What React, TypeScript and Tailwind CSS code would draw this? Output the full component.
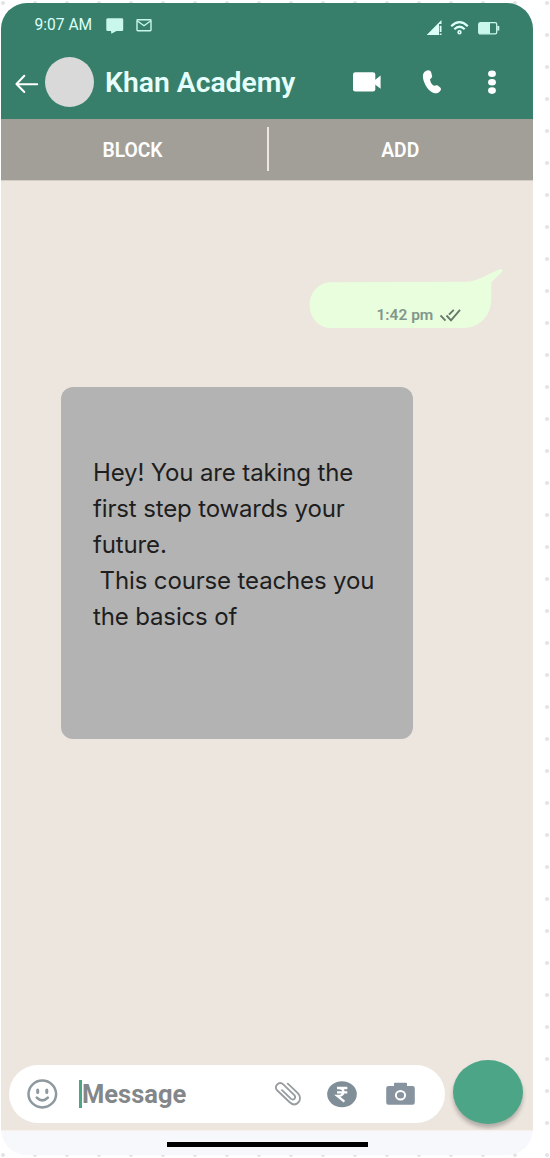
import React from "react";

function StatusBar() {
  return (
    <div className="flex h-[43px] shrink-0 items-center pl-[33.5px] text-[#dcfff8]">
      <span className="w-[71px] pt-px text-[15.6px] leading-5 whitespace-nowrap">9:07 AM</span>
      <svg className="mt-[2px] h-4 w-[18px]" viewBox="0 0 18 16" fill="#c9f7ec">
        <path d="M2 .3H16Q17.2.3 17.2 1.6V12Q17.2 13 16 13H10.5L5.3 15.7 5 13H1.7Q.3 13 .3 11.8V1.6Q.3.3 2 .3Z" />
      </svg>
      <svg className="ml-[12px] h-[14px] w-[16px]" viewBox="0 0 16 14" fill="none" stroke="#c9f7ec" strokeWidth="1.4">
        <rect x="1" y="1.7" width="14" height="11" rx=".7" />
        <path d="M1.5 3 8 7.7 14.5 3" />
      </svg>
      <svg className="mt-[7px] ml-[274.5px] h-[16px] w-[17px]" viewBox="0 0 17 16" fill="#dcfff8">
        <path d="M.7 15 12 3.5V15ZM12 3.5 15.5 0V4H13V15H12ZM13.7 5.7H15.5V12H13.7ZM13.7 13.4H15.5V15H13.7Z" />
      </svg>
      <svg className="mt-[6px] ml-[7px] h-[14px] w-[19px]" viewBox="0 0 19 14" fill="none" stroke="#dcfff8" strokeWidth="2.2">
        <path d="M1.2 5.2Q9.5-2.8 17.8 5.2M4.3 8.2Q9.5 3.3 14.7 8.2" />
        <circle cx="9.5" cy="11.2" r="1.4" strokeWidth="1.6" />
      </svg>
      <svg className="mt-[7px] ml-[8.5px] h-[13px] w-[22px]" viewBox="0 0 22 13" fill="none" stroke="#c9f7ec" strokeWidth="1.3">
        <rect x=".7" y=".7" width="18" height="11.2" rx="1.6" />
        <path d="M1 1H12V11.8H1Z" fill="#c9f7ec" stroke="none" />
        <path d="M20.3 4V8.5" strokeWidth="2" />
      </svg>
    </div>
  );
}

function Header() {
  return (
    <header className="flex h-[116px] shrink-0 flex-col bg-[#377f6a]">
      <StatusBar />
      <div className="flex h-[73px] items-center pl-[13px]">
        <svg className="mt-[3px] h-[20px] w-[25px]" viewBox="0 0 25 20" fill="none" stroke="#fff" strokeWidth="2" strokeLinecap="round" strokeLinejoin="round">
          <path d="M10.3 1.7 2.5 10 10.3 18M2.5 10.2H23.2" />
        </svg>
        <div className="-mt-px ml-[5.5px] h-[50px] w-[49px] rounded-[50%] bg-[#d9d9d9]" />
        <h1 className="ml-[11.5px] w-[248px] text-[28.3px] leading-8 font-semibold whitespace-nowrap text-[#e6fffc]">Khan Academy</h1>
        <svg className="-mt-px h-[20px] w-[28px]" viewBox="0 0 28 20" fill="#fff">
          <rect y=".2" width="22.3" height="19.4" rx="2.4" />
          <path d="M22 8 27.6 3.5V16.7L22 12.5Z" />
        </svg>
        <svg className="-mt-px ml-[41px] h-[24px] w-[20px]" viewBox="0 0 20 24" fill="#fff">
          <path d="M4.2.8C6.5-.2 8.5.3 9.2 2.4L10.1 6C10.5 7.7 8.6 8.3 8.1 9.3 8 11.3 9.4 14 11.4 15.5 13 16 14.2 14.8 15.7 15.6L18 17.2C19.6 18.5 19.1 20.5 17.5 21.8 15 24.1 11.7 23.7 8.9 21.6 5.4 18.9 2.1 13.7 1.1 8.5.4 4.9 1.3 2.1 4.2.8Z" />
        </svg>
        <svg className="-mt-px ml-[46px] h-[25px] w-[8px]" viewBox="0 0 8 25" fill="#fff">
          <ellipse cx="4" cy="3.8" rx="3.9" ry="3.3" />
          <ellipse cx="4" cy="12.3" rx="3.9" ry="3.3" />
          <ellipse cx="4" cy="20.6" rx="3.9" ry="3.3" />
        </svg>
      </div>
    </header>
  );
}

function ActionBar() {
  return (
    <div className="flex h-[62px] shrink-0 items-center border-b border-[#d5cdc4] bg-[#a29f99] text-[19.3px] font-semibold text-white">
      <button className="w-[266px] pt-[3px] pr-[3px] text-center">BLOCK</button>
      <div className="-mt-px h-[44px] w-[1.5px] bg-[#eee7e0]" />
      <button className="flex-1 pt-[3px] pr-px text-center">ADD</button>
    </div>
  );
}

function SentBubble() {
  return (
    <div className="relative ml-[308px] h-[60px] w-[196px]">
      <svg className="h-[60px] w-[196px]" viewBox="0 0 196 60" fill="#e9fedc">
        <path d="M22 14.2 156 13.8C162 13.6 166 12.4 172 10L190 1.6C193 .7 194.6 2.3 192.8 4.2L184 12.4C182.6 13.7 182.3 14.5 182.3 16V31C182.3 48 170 60 154 60H22C10 60 .7 50 .7 37 .7 24 10 14.2 22 14.2Z" />
      </svg>
      <div className="absolute top-[37px] left-[67.5px] flex items-center whitespace-nowrap text-[#81978b]">
        <span className="w-[63px] text-[15.5px] leading-5 font-semibold">1:42 pm</span>
        <svg className="h-[13px] w-[21px]" viewBox="0 0 21 13" fill="none" stroke="#65786c" strokeWidth="1.9">
          <path d="M.5 6.5 5.5 11.7M6.5 6.5 11 11.3 20 .8M9 5.7 13.8.8" />
        </svg>
      </div>
    </div>
  );
}

function Composer() {
  return (
    <div className="flex items-start pl-[8px]">
      <div className="mt-[5px] flex h-[58px] w-[436px] items-center rounded-full bg-white pl-[17.5px]">
        <svg className="h-[30px] w-[31px]" viewBox="0 0 31 30" fill="none" stroke="#8d989f" strokeLinecap="round">
          <ellipse cx="15.3" cy="15" rx="13.8" ry="13.4" strokeWidth="2.5" />
          <path d="M10.7 11V13.4M19.8 11V13.4" strokeWidth="3" />
          <path d="M9.8 18.6Q15.3 24.3 20.8 18.6" strokeWidth="2.7" />
        </svg>
        <div className="-mt-px ml-[21.5px] h-[28px] w-[3px] bg-[#4da588]" />
        <span className="w-[192.5px] text-[25.5px] leading-7 font-bold text-[#838789]">Message</span>
        <svg className="h-[24px] w-[26px]" viewBox="0 0 26 24" fill="none" stroke="#969c9f" strokeWidth="1.8" strokeLinecap="round">
          <path d="M12.8 1.7 22.8 11.2C25.6 14 25.8 18 23.3 20.5 20.7 23 17.2 22.8 14.4 20L2.3 8.5C.4 6.7.4 4.2 2.2 2.5 4 .7 6.6.9 8.5 2.7L19.3 13.2C20.4 14.4 20.4 15.8 19.4 16.8 18.4 17.8 17 17.8 15.8 16.6L7 8.2" />
        </svg>
        <svg className="ml-[26px] h-[28px] w-[30px]" viewBox="0 0 30 28">
          <ellipse cx="15" cy="14.3" rx="14.8" ry="13" fill="#808e97" />
          <path d="M10 8H20.3M10 12.4H20.3M11 8C18.5 7.5 18.5 16.4 10.5 16L17.4 21.7" fill="none" stroke="#fff" strokeWidth="2.3" />
        </svg>
        <svg className="ml-[29px] h-[24px] w-[29px]" viewBox="0 0 29 24">
          <path d="M9 .8H20Q21 .8 21 1.8V4H26.5Q28.8 4 28.8 6.3V20.5Q28.8 22.8 26.5 22.8H2.5Q.2 22.8.2 20.5V6.3Q.2 4 2.5 4H8V1.8Q8 .8 9 .8Z" fill="#8794a0" />
          <ellipse cx="14.5" cy="13.3" rx="4.6" ry="4.3" fill="none" stroke="#fff" strokeWidth="2" />
        </svg>
      </div>
      <button aria-label="Record" className="ml-[8px] h-[64px] w-[70px] rounded-[50%] bg-[#4da588] shadow-[0_4px_4px_rgba(0,0,0,0.25)]" />
    </div>
  );
}

export default function App() {
  return (
    <div className="h-[1158px] w-[550px] bg-white bg-[radial-gradient(circle,#e5e5e5_1.6px,transparent_2.3px)] bg-[length:32px_32px] bg-[position:-13px_-13px] pt-[3px] pl-px font-['Roboto',sans-serif]">
      <div className="flex h-[1152px] w-[532px] flex-col overflow-hidden rounded-[26px] bg-[#f6f8fb]">
        <Header />
        <ActionBar />
        <main className="flex h-[949px] shrink-0 flex-col bg-[#ede6df] pt-[87px]">
          <SentBubble />
          <div className="mt-[59px] ml-[60px] h-[352px] w-[352px] rounded-[12px] bg-[#b3b3b3] px-8 pt-[68px] font-['Inter',sans-serif] text-[24px] leading-[36px] tracking-[-0.14px] whitespace-pre text-[#1e1e1e]">
            {"Hey! You are taking the\nfirst step towards your\nfuture.\n This course teaches you\nthe basics of"}
          </div>
          <div className="mt-auto mb-[6px]">
            <Composer />
          </div>
        </main>
        <footer className="flex flex-1 justify-center border-t border-[#f8f0ea] pt-[11px]">
          <div className="h-[5px] w-[201px] bg-black" />
        </footer>
      </div>
    </div>
  );
}
